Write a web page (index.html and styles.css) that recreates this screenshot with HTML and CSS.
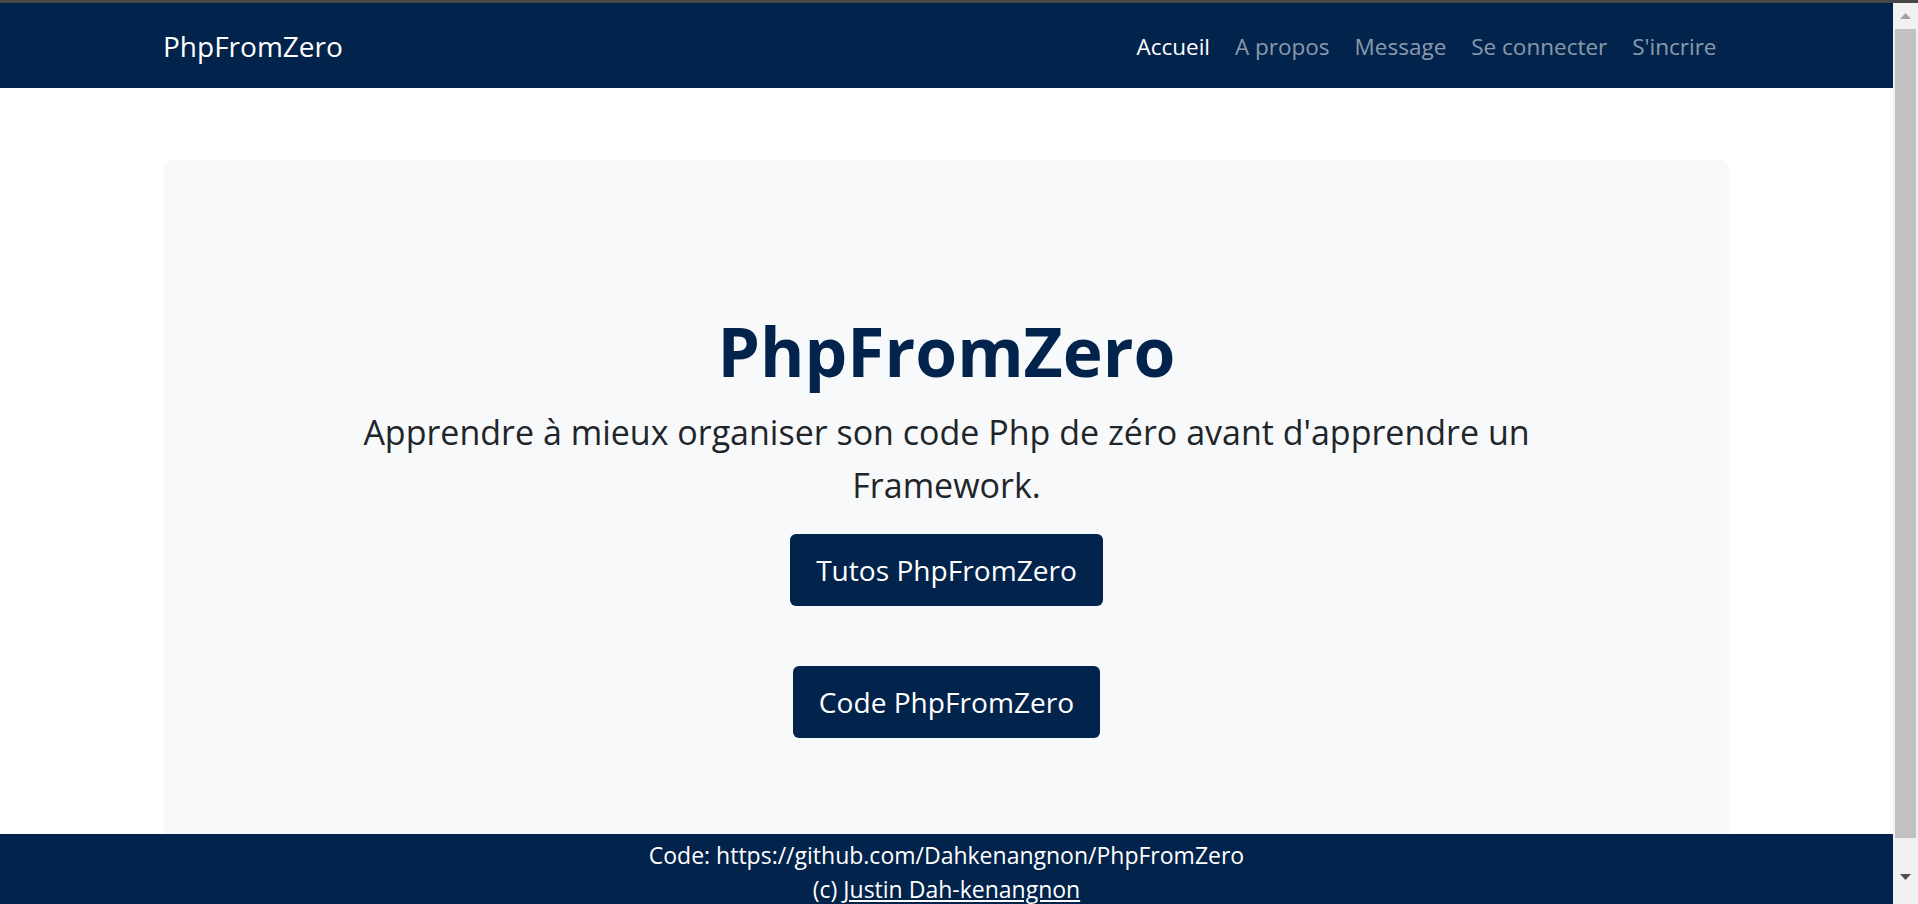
FILE: index.html
```html
<!DOCTYPE html>
<html lang="fr">
<head>
<meta charset="utf-8">
<title>PhpFromZero</title>
<link rel="stylesheet" href="styles.css">
</head>
<body>
<div class="topline"></div>
<div class="frame">
  <div class="viewport">
    <nav class="navbar">
      <div class="container nav-inner">
        <a class="brand" href="#">PhpFromZero</a>
        <ul class="nav">
          <li><a class="nav-link active" href="#">Accueil</a></li>
          <li><a class="nav-link" href="#">A propos</a></li>
          <li><a class="nav-link" href="#">Message</a></li>
          <li><a class="nav-link" href="#">Se connecter</a></li>
          <li><a class="nav-link" href="#">S'incrire</a></li>
        </ul>
      </div>
    </nav>
    <main class="main">
      <div class="container">
        <section class="hero">
          <h1 class="hero-title">PhpFromZero</h1>
          <p class="lead">Apprendre à mieux organiser son code Php de zéro avant d'apprendre un Framework.</p>
          <p class="btn-row"><a class="btn" href="#">Tutos PhpFromZero</a></p>
          <p class="btn-row"><a class="btn" href="#">Code PhpFromZero</a></p>
        </section>
      </div>
    </main>
    <footer class="footer">
      <div>Code: https://github.com/Dahkenangnon/PhpFromZero</div>
      <div>(c) <a class="footer-link" href="#">Justin Dah-kenangnon</a></div>
    </footer>
  </div>
  <div class="scrollbar">
    <div class="sb-btn sb-up"><svg width="11" height="6" viewBox="0 0 11 6"><path d="M0 6 L5.5 0 L11 6 Z" fill="#a3a3a3"/></svg></div>
    <div class="sb-thumb"></div>
    <div class="sb-gap"></div>
    <div class="sb-btn sb-down"><svg width="11" height="6" viewBox="0 0 11 6"><path d="M0 0 L11 0 L5.5 6 Z" fill="#505050"/></svg></div>
  </div>
</div>
</body>
</html>
```
FILE: styles.css
```css
html, body {
  margin: 0;
  padding: 0;
  height: 904px;
  overflow: hidden;
  background: #ffffff;
  font-family: "Open Sans", "Noto Sans", sans-serif;
  color: #212529;
}
.topline {
  height: 3px;
  background: #474747;
}
.frame {
  display: flex;
  height: 901px;
}
.viewport {
  flex: 1;
  display: flex;
  flex-direction: column;
  overflow: hidden;
  background: #ffffff;
}
.container {
  width: 1565px;
  margin: 0 auto;
}
.navbar {
  height: 85px;
  flex: none;
  background: #02234b;
  display: flex;
}
.nav-inner {
  display: flex;
  align-items: center;
  justify-content: space-between;
}
.brand {
  font-size: 28px;
  color: #ffffff;
  text-decoration: none;
  line-height: 1.5;
  padding-top: 1px;
  margin-left: -1px;
}
.nav {
  display: flex;
  list-style: none;
  margin: 0;
  padding: 0;
}
.nav-link {
  display: block;
  font-size: 22.5px;
  line-height: 1.5;
  padding: 2px 12.5px 0;
  color: rgba(255, 255, 255, 0.55);
  text-decoration: none;
}
.nav-link.active {
  color: #ffffff;
}
.main {
  flex: 1;
  overflow: hidden;
  padding-top: 72px;
}
.hero {
  background: #f8f9fa;
  border-radius: 8px;
  padding: 151px 0 120px;
  display: flex;
  flex-direction: column;
  align-items: center;
  text-align: center;
}
.hero-title {
  margin: 0 0 13.5px;
  font-size: 67.7px;
  font-weight: 700;
  line-height: 81.2px;
  color: #02234b;
}
.lead {
  margin: 0 0 21.1px;
  max-width: 1250px;
  font-size: 34px;
  line-height: 53.6px;
  color: #212529;
}
.btn-row {
  display: flex;
  justify-content: center;
  margin: 0 0 60px;
}
.btn {
  display: block;
  background: #02234b;
  color: #ffffff;
  text-decoration: none;
  font-size: 28.1px;
  line-height: 42px;
  padding: 15px 26px;
  border-radius: 6px;
}
.footer {
  height: 70px;
  flex: none;
  background: #02234b;
  color: #ffffff;
  text-align: center;
  font-size: 23px;
  line-height: 34px;
  padding-top: 3.5px;
  box-sizing: border-box;
}
.footer-link {
  color: #ffffff;
  text-decoration: underline;
}
.scrollbar {
  width: 25px;
  flex: none;
  background: #f1f1f1;
  display: flex;
  flex-direction: column;
  align-items: center;
}
.sb-btn {
  width: 25px;
  display: flex;
  align-items: center;
  justify-content: center;
}
.sb-up {
  height: 26px;
}
.sb-down {
  height: 25px;
}
.sb-thumb {
  width: 21px;
  height: 809px;
  background: #c1c1c1;
}
.sb-gap {
  height: 26px;
}
```
